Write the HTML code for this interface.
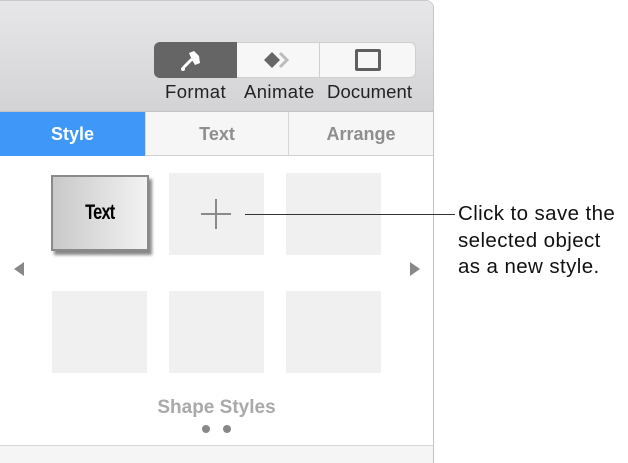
<!DOCTYPE html>
<html><head><style>
body{margin:0;width:628px;height:462px;background:#fff;position:relative;overflow:hidden;font-family:"Liberation Sans",Helvetica,Arial,sans-serif}
.panel{position:absolute;left:0;top:0;width:433px;height:462px;border-right:1px solid #c4c4c4;border-top:1px solid #c8c8c8;border-top-right-radius:8px;overflow:hidden;background:#fff}
.tb{position:absolute;left:0;top:0;width:433px;height:110px;background:linear-gradient(#e7e6e9,#d3d3d5);border-bottom:1px solid #c2c2c2}
.seg{position:absolute;top:41px;height:36px;box-sizing:border-box}
.lbl{position:absolute;top:80px;font-size:18.5px;letter-spacing:0.4px;color:#222}
.tab{position:absolute;top:111px;height:44px;line-height:44px;text-align:center;font-size:18px;font-weight:bold;color:#8e8e8e;background:#f6f6f6;border-bottom:1px solid #d0d0d0;box-sizing:border-box}
.tile{position:absolute;width:95px;height:82px;background:#f0f0f0}
.ct{position:absolute;left:458px;font-size:20.5px;letter-spacing:0.4px;color:#111;line-height:26.5px}
</style></head><body>
<div class="panel">
<div class="tb">
<div class="seg" style="left:154px;width:262px;background:#f7f7f7;border:1px solid #cfcfcf;border-radius:6px"></div>
<div class="seg" style="left:154px;width:83px;background:#656565;border-radius:6px 0 0 6px"></div>
<div class="seg" style="left:319px;width:1px;background:#d0d0d0;top:42px;height:34px"></div>
<svg style="position:absolute;left:180px;top:48px" width="24" height="24" viewBox="0 0 24 24"><path d="M9 4 L14 2 L19 7 L20 14 L15 16 L12 11 Z" fill="#fff"/><path d="M11 11 L4 18" stroke="#fff" stroke-width="3" stroke-linecap="round"/><circle cx="3" cy="20" r="2" fill="#fff"/></svg>
<svg style="position:absolute;left:262px;top:48px" width="32" height="22" viewBox="0 0 32 22"><path d="M2 11 L10 3 L18 11 L10 19 Z" fill="#666"/><path d="M18 4 L25 11 L18 18" fill="none" stroke="#bbb" stroke-width="3"/></svg>
<div style="position:absolute;left:355px;top:48px;width:20px;height:16px;border:3px solid #606060;border-radius:2px;background:#f7f7f7"></div>
<div class="lbl" style="left:165px">Format</div>
<div class="lbl" style="left:244px">Animate</div>
<div class="lbl" style="left:327px;letter-spacing:0.1px">Document</div>
</div>
<div class="tab" style="left:0;width:145px;background:#3f98f7;color:#fff;border-bottom-color:#3f98f7">Style</div>
<div class="tab" style="left:145px;width:143px;border-left:1px solid #d6d6d6">Text</div>
<div class="tab" style="left:288px;width:145px;border-left:1px solid #d6d6d6">Arrange</div>
<div style="position:absolute;left:51px;top:174px;width:94px;height:72px;border:2px solid #8a8a8a;background:linear-gradient(90deg,#c9c9c9,#f2f2f2);box-shadow:3px 4px 3px #888;text-align:center;line-height:72px"><span style="display:inline-block;font-size:21px;font-weight:bold;letter-spacing:-1px;transform:scaleX(.78)">Text</span></div>
<div class="tile" style="left:169px;top:172px"></div>
<div style="position:absolute;left:201px;top:212px;width:30px;height:2px;background:#8a8a8a"></div>
<div style="position:absolute;left:215px;top:198px;width:2px;height:30px;background:#8a8a8a"></div>
<div class="tile" style="left:286px;top:172px"></div>
<div class="tile" style="left:52px;top:290px"></div>
<div class="tile" style="left:169px;top:290px"></div>
<div class="tile" style="left:286px;top:290px"></div>
<div style="position:absolute;left:14px;top:261px;border-right:10px solid #888;border-top:7px solid transparent;border-bottom:7px solid transparent"></div>
<div style="position:absolute;left:410px;top:261px;border-left:10px solid #888;border-top:7px solid transparent;border-bottom:7px solid transparent"></div>
<div style="position:absolute;left:0;width:433px;top:396px;text-align:center;font-size:19px;font-weight:bold;color:#a9a9a9">Shape Styles</div>
<div style="position:absolute;left:202px;top:424px;width:8px;height:8px;border-radius:50%;background:#888"></div>
<div style="position:absolute;left:223px;top:424px;width:8px;height:8px;border-radius:50%;background:#888"></div>
<div style="position:absolute;left:0;top:444px;width:433px;height:30px;background:#f5f5f5;border-top:1px solid #d6d6d6"></div>
</div>
<div style="position:absolute;left:245px;top:214px;width:210px;height:1px;background:#333"></div>
<div class="ct" style="top:201px">Click to save the<br>selected object<br>as a new style.</div>
</body></html>
